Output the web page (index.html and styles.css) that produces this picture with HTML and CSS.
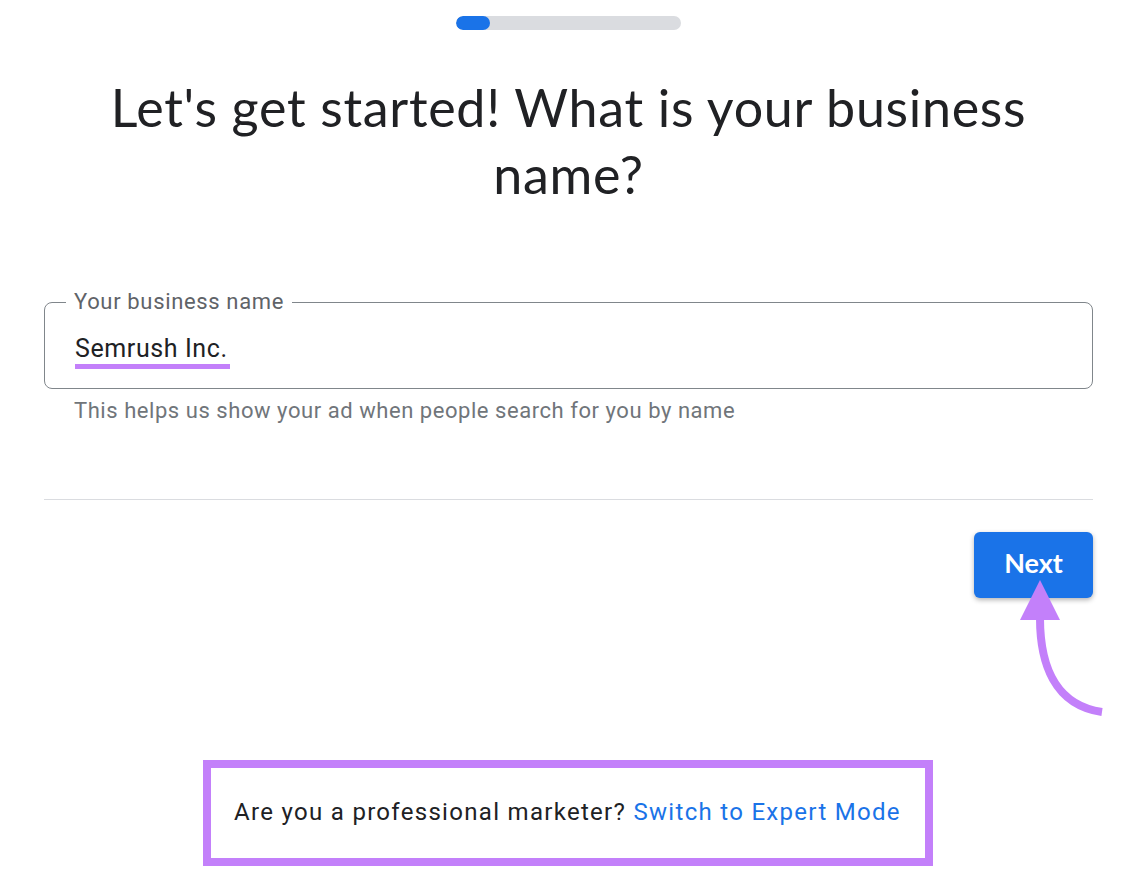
FILE: index.html
```html
<!DOCTYPE html>
<html lang="en">
<head>
<meta charset="utf-8">
<title>Business name</title>
<link rel="stylesheet" href="styles.css">
</head>
<body>
<main class="page">
  <div class="progress"><div class="progress-fill"></div></div>
  <h1 class="title">Let's get started! What is your business name?</h1>
  <fieldset class="field">
    <legend class="field-label">Your business name</legend>
    <div class="field-value"><span class="marked">Semrush Inc.</span></div>
  </fieldset>
  <p class="helper">This helps us show your ad when people search for you by name</p>
  <hr class="divider">
  <div class="actions">
    <button class="next-btn" type="button">Next</button>
  </div>
  <div class="expert">
    Are you a professional marketer? <a class="expert-link" href="#">Switch to Expert Mode</a>
  </div>
  <svg class="arrow" width="110" height="150" viewBox="0 0 110 150" aria-hidden="true">
    <path d="M30 43 C30 88, 44 130, 92 137" fill="none" stroke="#c380fa" stroke-width="8"/>
    <polygon points="30,5 10,45 50,45" fill="#c380fa"/>
  </svg>
</main>
</body>
</html>
```
FILE: styles.css
```css
html, body {
  margin: 0;
  padding: 0;
  background: #ffffff;
}
body {
  font-family: Roboto, "Liberation Sans", Arial, sans-serif;
  color: #202124;
}
.page {
  position: relative;
  width: 1049px;
  margin-left: 44px;
  padding-top: 16px;
  display: flex;
  flex-direction: column;
}
.progress {
  align-self: center;
  width: 225px;
  height: 14px;
  border-radius: 7px;
  background: #dadce0;
  overflow: hidden;
}
.progress-fill {
  width: 34px;
  height: 100%;
  border-radius: 7px;
  background: #1a73e8;
}
.title {
  margin: 44px 0 0;
  font-family: Lato, "Open Sans", sans-serif;
  font-weight: 400;
  font-size: 52px;
  line-height: 67px;
  letter-spacing: 0.7px;
  text-align: center;
  color: #202124;
  padding: 0 50px;
}
.field {
  margin: 82px 0 0;
  border: 1px solid #80868b;
  border-radius: 8px;
  padding: 20px 30px 19px;
  min-width: 0;
}
.field-label {
  margin-left: -9px;
  padding: 0 8px;
  font-size: 22px;
  line-height: 24px;
  color: #5f6368;
  letter-spacing: 0.65px;
}
.field-value {
  font-size: 25px;
  line-height: 29px;
  color: #202124;
  letter-spacing: 0.6px;
}
.marked {
  display: inline-block;
  padding-right: 2px;
  padding-bottom: 1px;
  border-bottom: 5px solid #c380fa;
}
.helper {
  margin: 9px 0 0;
  padding-left: 30px;
  font-size: 22px;
  line-height: 26px;
  color: #70757a;
  letter-spacing: 0.55px;
}
.divider {
  margin: 75px 0 0;
  border: 0;
  height: 1px;
  background: #dadce0;
}
.actions {
  display: flex;
  justify-content: flex-end;
  margin-top: 32px;
}
.next-btn {
  width: 119px;
  height: 66px;
  padding: 0 0 5px;
  border: 0;
  border-radius: 6px;
  background: #1a73e8;
  color: #ffffff;
  font-family: Lato, "Open Sans", sans-serif;
  font-size: 27px;
  font-weight: 700;
  box-shadow: 0 2px 5px rgba(0, 0, 0, 0.3);
  cursor: pointer;
}
.expert {
  align-self: center;
  width: 714px;
  margin-top: 162px;
  margin-left: -2px;
  border: 8px solid #c380fa;
  padding: 30px 0 32px;
  text-align: center;
  font-size: 24px;
  line-height: 28px;
  color: #202124;
  letter-spacing: 1.3px;
}
.expert-link {
  color: #1a73e8;
  text-decoration: none;
}
.arrow {
  position: absolute;
  left: 966px;
  top: 575px;
  overflow: visible;
}
```
